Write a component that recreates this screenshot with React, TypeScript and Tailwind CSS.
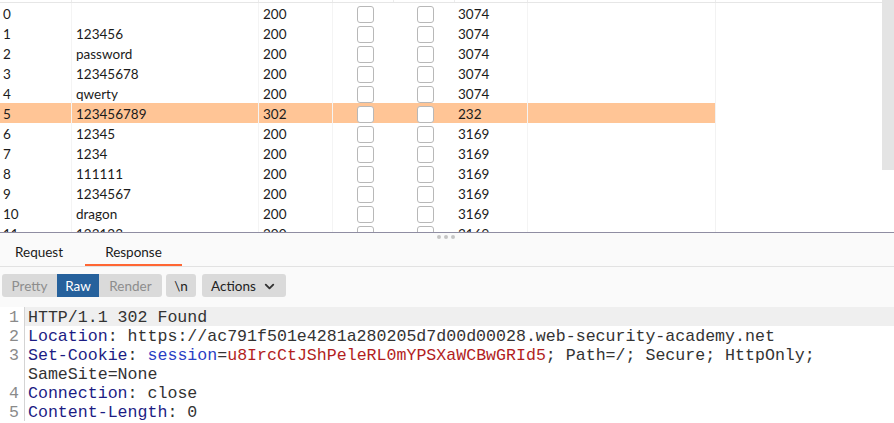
import { ChevronDown } from 'lucide-react';

const rows: [string, string, string, string][] = [
  ['0', '', '200', '3074'],
  ['1', '123456', '200', '3074'],
  ['2', 'password', '200', '3074'],
  ['3', '12345678', '200', '3074'],
  ['4', 'qwerty', '200', '3074'],
  ['5', '123456789', '302', '232'],
  ['6', '12345', '200', '3169'],
  ['7', '1234', '200', '3169'],
  ['8', '111111', '200', '3169'],
  ['9', '1234567', '200', '3169'],
  ['10', 'dragon', '200', '3169'],
  ['11', '123123', '200', '3169'],
];

const gridCols = 'grid grid-cols-[72px_187px_74px_61px_61px_73px_188px_1fr]';

function Box() {
  return <div className="w-[17px] h-[17px] rounded-[3px] border-[1.5px] border-[#b8b8b8] bg-white" />;
}

function Row({ r, hl }: { r: [string, string, string, string]; hl: boolean }) {
  return (
    <div className={`${gridCols} h-[20px] items-stretch ${hl ? 'bg-[#ffc596]' : ''}`}>
      <div className="pl-[3px] pt-[1px] flex items-center border-r border-[#f4f4f4]">{r[0]}</div>
      <div className="pl-[4px] pt-[1px] flex items-center border-r border-[#f4f4f4]">{r[1]}</div>
      <div className="pl-[4px] pt-[1px] flex items-center border-r border-[#f4f4f4]">{r[2]}</div>
      <div className="pl-[24px] pt-[1px] flex items-center"><Box /></div>
      <div className="pl-[23px] pt-[1px] flex items-center"><Box /></div>
      <div className="pl-[3px] pt-[1px] flex items-center border-r border-[#f4f4f4]">{r[3]}</div>
      <div className="border-r border-[#f2f2f2]" />
      <div className={hl ? 'bg-white' : ''} />
    </div>
  );
}

function Btn({ children, className }: { children: React.ReactNode; className: string }) {
  return <div className={`h-[23px] flex items-center justify-center ${className}`}>{children}</div>;
}

function Line({ n, children, hl }: { n?: string; children: React.ReactNode; hl?: boolean }) {
  return (
    <div className="flex h-[19px]">
      <div className="w-[25px] shrink-0 h-full flex items-center justify-end pt-[3px] pr-[5px] text-[#8a8a8a] border-r border-[#d4d4d4]">{n}</div>
      <div className={`flex-1 h-full flex items-center pt-[3px] pl-[3px] whitespace-pre ${hl ? 'bg-[#efefef]' : ''}`}>{children}</div>
    </div>
  );
}

export default function App() {
  return (
    <div className="w-[894px] h-[423px] overflow-hidden bg-white text-[#1b1b1b] font-['Lato','Open_Sans',sans-serif] text-[13.5px]">
      <div className="flex h-[232px]">
        <div className="flex-1 overflow-hidden">
          <div className={`${gridCols} h-[3px] border-b border-[#e6e6e6]`}>
            <div className="border-r border-[#ececec]" />
            <div className="border-r border-[#ececec]" />
            <div className="border-r border-[#ececec]" />
            <div className="border-r border-[#ececec]" />
            <div className="border-r border-[#ececec]" />
            <div className="border-r border-[#ececec]" />
            <div className="border-r border-[#ececec]" />
            <div />
          </div>
          {rows.map((r) => (
            <Row key={r[0]} r={r} hl={r[0] === '5'} />
          ))}
        </div>
        <div className="w-[12px] flex flex-col">
          <div className="h-[170px] bg-[#e4e4e4]" />
        </div>
      </div>

      <div className="bg-[#fafafa] border-t border-[#8f8da2]">
        <div className="relative h-[34px] flex border-b border-[#e2e2e2]">
          <div className="absolute left-[437px] top-[2px] flex gap-[3px]">
            <span className="w-[4px] h-[4px] rounded-full bg-[#c4c4c4]" />
            <span className="w-[4px] h-[4px] rounded-full bg-[#c4c4c4]" />
            <span className="w-[4px] h-[4px] rounded-full bg-[#c4c4c4]" />
          </div>
          <div className="w-[85px] pl-[15px] flex items-center pt-[5px]">Request</div>
          <div className="w-[97px] flex items-center justify-center pt-[5px] relative">
            Response
            <div className="absolute left-0 right-0 bottom-0 h-[2px] bg-[#ff6633]" />
          </div>
        </div>

        <div className="h-[40px] flex items-start pt-[7px] pl-[2px]">
          <div className="flex rounded-[3px] overflow-hidden bg-[#dadada]">
            <Btn className="w-[55px] pt-[1px] text-[#8d8d8d]">Pretty</Btn>
            <Btn className="w-[42px] pt-[1px] bg-[#26619c] text-white">Raw</Btn>
            <Btn className="w-[63px] pt-[1px] text-[#8d8d8d]">Render</Btn>
          </div>
          <Btn className="ml-[4px] w-[30px] pt-[1px] rounded-[3px] bg-[#dadada] text-[#222]">\n</Btn>
          <Btn className="ml-[6px] w-[84px] pt-[1px] rounded-[3px] bg-[#dadada] text-[#222] gap-[6px]">
            Actions
            <ChevronDown size={15} strokeWidth={3} className="text-[#333]" />
          </Btn>
        </div>
      </div>

      <div className="bg-white font-['Liberation_Mono','Courier_New',monospace] text-[16.6px] text-[#333] leading-none">
        <Line n="1" hl>HTTP/1.1 302 Found</Line>
        <Line n="2">
          <span className="text-[#1c1c84]">Location</span>: https://ac791f501e4281a280205d7d00d00028.web-security-academy.net
        </Line>
        <Line n="3">
          <span className="text-[#1c1c84]">Set-Cookie</span>: <span className="text-[#2a3ec4]">session</span>=
          <span className="text-[#b21e1e]">u8IrcCtJShPeleRL0mYPSXaWCBwGRId5</span>; Path=/; Secure; HttpOnly;
        </Line>
        <Line>SameSite=None</Line>
        <Line n="4">
          <span className="text-[#1c1c84]">Connection</span>: close
        </Line>
        <Line n="5">
          <span className="text-[#1c1c84]">Content-Length</span>: 0
        </Line>
      </div>
    </div>
  );
}
